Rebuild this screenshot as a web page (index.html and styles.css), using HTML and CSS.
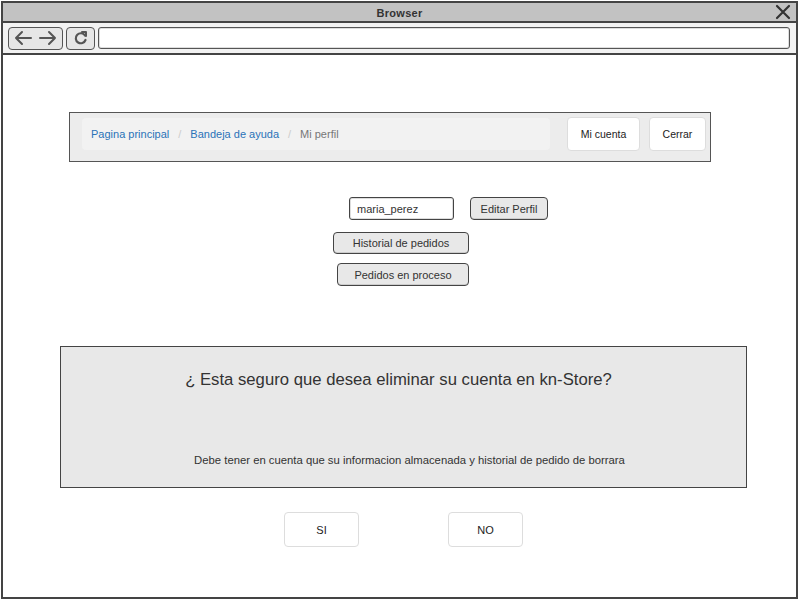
FILE: index.html
```html
<!DOCTYPE html>
<html lang="es">
<head>
<meta charset="utf-8">
<title>Browser</title>
<link rel="stylesheet" href="styles.css">
</head>
<body>
<div class="window">
  <div class="titlebar">
    <span class="title">Browser</span>
    <svg class="close" width="16" height="16" viewBox="0 0 16 16"><path d="M2 2 L14 14 M14 2 L2 14" stroke="#333" stroke-width="2.2" fill="none" stroke-linecap="round"/></svg>
  </div>
  <div class="toolbar">
    <div class="tbtn nav">
      <svg width="48" height="18" viewBox="0 0 48 18"><path d="M4 9 H19 M4 9 L10 3 M4 9 L10 15" stroke="#555" stroke-width="2" fill="none" stroke-linecap="round" stroke-linejoin="round"/><path d="M28 9 H43 M43 9 L37 3 M43 9 L37 15" stroke="#555" stroke-width="2" fill="none" stroke-linecap="round" stroke-linejoin="round"/></svg>
    </div>
    <div class="tbtn reload">
      <svg width="18" height="18" viewBox="0 0 18 18"><path d="M13 6.5 A5 5 0 1 0 13.5 11" stroke="#555" stroke-width="2.2" fill="none" stroke-linecap="round"/><path d="M10 3 L14 3 L14 7" stroke="#555" stroke-width="2" fill="none" stroke-linecap="round" stroke-linejoin="round"/></svg>
    </div>
    <div class="url"></div>
  </div>
  <div class="content">
    <div class="navpanel">
      <div class="crumbs">
        <a class="crumb">Pagina principal</a>
        <span class="sep">/</span>
        <a class="crumb">Bandeja de ayuda</a>
        <span class="sep">/</span>
        <span class="current">Mi perfil</span>
      </div>
      <div class="navbtn btn-cuenta">Mi cuenta</div>
      <div class="navbtn btn-cerrar">Cerrar</div>
    </div>

    <div class="profile">
      <div class="row row-user">
        <div class="input">maria_perez</div>
        <div class="sbtn btn-editar">Editar Perfil</div>
      </div>
      <div class="row"><div class="sbtn btn-historial">Historial de pedidos</div></div>
      <div class="row"><div class="sbtn btn-proceso">Pedidos en proceso</div></div>
    </div>

    <div class="dialog">
      <div class="dlg-title">¿ Esta seguro que desea eliminar su cuenta en kn-Store?</div>
      <div class="dlg-text">Debe tener en cuenta que su informacion almacenada y historial de pedido de borrara</div>
    </div>

    <div class="answers">
      <div class="abtn">SI</div>
      <div class="abtn">NO</div>
    </div>
  </div>
</div>
</body>
</html>
```

FILE: styles.css
```css
* { box-sizing: border-box; }
html, body { margin: 0; padding: 0; background: #fff; }
body {
  width: 800px;
  height: 601px;
  overflow: hidden;
  font-family: "Liberation Sans", "DejaVu Sans", sans-serif;
  color: #333;
}
.window {
  margin: 1px 2px 0 1px;
  width: 797px;
  height: 598px;
  border: 2px solid #444;
  display: flex;
  flex-direction: column;
  background: #fff;
}
.titlebar {
  height: 20px;
  background: #c2c2c2;
  border-bottom: 2px solid #444;
  display: flex;
  align-items: center;
  justify-content: center;
  position: relative;
  padding-top: 2px;
}
.title {
  font-size: 11px;
  font-weight: bold;
  color: #333;
  letter-spacing: 0.3px;
}
.close {
  position: absolute;
  right: 5px;
  top: 1px;
}
.toolbar {
  height: 32px;
  background: #f2f2f2;
  border-bottom: 2px solid #444;
  display: flex;
  align-items: center;
  padding: 0 6px 0 5px;
  gap: 3px;
}
.tbtn {
  height: 23px;
  border: 1.5px solid #555;
  border-radius: 4px;
  background: #e6e6e6;
  display: flex;
  align-items: center;
  justify-content: center;
}
.nav { width: 55px; }
.reload { width: 29px; }
.url {
  flex: 1;
  height: 22px;
  border: 1.5px solid #555;
  border-radius: 3px;
  background: #fff;
  box-shadow: inset 0 0 0 1px #ddd;
}
.content {
  flex: 1;
  display: flex;
  flex-direction: column;
  padding-top: 57px;
}
.navpanel {
  margin-left: 66px;
  width: 642px;
  height: 50px;
  border: 1px solid #555;
  background: #ececec;
  display: flex;
  align-items: flex-start;
  padding: 4px 4px 0 12px;
}
.crumbs {
  margin-top: 1px;
  width: 468px;
  height: 32px;
  background: #f2f2f2;
  border-radius: 4px;
  display: flex;
  align-items: center;
  padding-left: 9px;
  font-size: 11px;
}
.crumb { color: #2a72b8; }
.sep { color: #ccc; margin: 0 9px 0 9px; }
.current { color: #777; }
.navbtn {
  height: 34px;
  background: #fff;
  border: 1px solid #ddd;
  border-radius: 4px;
  display: flex;
  align-items: center;
  justify-content: center;
  font-size: 10.5px;
  color: #222;
}
.btn-cuenta { width: 73px; margin-left: 17px; }
.btn-cerrar { width: 57px; margin-left: 9px; }

.profile {
  margin-top: 35px;
  display: flex;
  flex-direction: column;
  gap: 12px;
}
.row { display: flex; align-items: center; }
.row-user { margin-left: 346px; gap: 16px; }
.input {
  width: 105px;
  height: 23px;
  border: 1.5px solid #444;
  border-radius: 3px;
  background: #fff;
  box-shadow: inset 0 0 0 1px #ddd;
  font-size: 11px;
  display: flex;
  align-items: center;
  padding-left: 7px;
  color: #333;
}
.sbtn {
  height: 23px;
  border: 1.5px solid #444;
  border-radius: 4px;
  background: #e8e8e8;
  box-shadow: inset 0 -1px 0 #ccc;
  font-size: 11px;
  display: flex;
  align-items: center;
  justify-content: center;
  color: #333;
}
.btn-editar { width: 78px; }
.btn-historial { width: 136px; margin-left: 330px; height: 22px; }
.btn-proceso { width: 132px; margin-left: 334px; }
.profile .row:nth-child(3) { margin-top: -3px; }

.dialog {
  margin-top: 60px;
  margin-left: 57px;
  width: 687px;
  height: 142px;
  border: 1px solid #444;
  background: #e8e8e8;
  display: flex;
  flex-direction: column;
  align-items: center;
}
.dlg-title {
  margin-top: 23px;
  margin-right: 10px;
  font-size: 16.7px;
  color: #333;
}
.dlg-text {
  margin-top: 64px;
  margin-left: 12px;
  font-size: 11.3px;
  color: #333;
}
.answers {
  margin-top: 24px;
  margin-left: 281px;
  display: flex;
  gap: 89px;
}
.abtn {
  width: 75px;
  height: 35px;
  background: #fff;
  border: 1px solid #ddd;
  border-radius: 4px;
  display: flex;
  align-items: center;
  justify-content: center;
  font-size: 11px;
  color: #222;
}
```
